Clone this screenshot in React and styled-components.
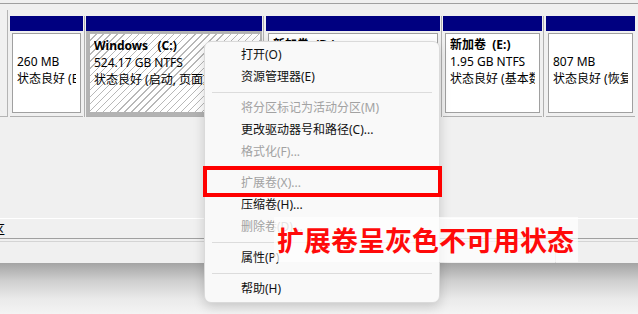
import React from 'react';
import styled, { createGlobalStyle, css } from 'styled-components';

const UI_FONT = `"Noto Sans", "Noto Sans CJK SC", sans-serif`;
const CJK_FONT = `"Noto Sans CJK SC", sans-serif`;

const GlobalStyle = createGlobalStyle`
  html, body { margin: 0; padding: 0; background: #f0f0f0; }
  * { box-sizing: border-box; }
`;

const Root = styled.div`
  position: relative;
  width: 638px;
  height: 314px;
  overflow: hidden;
  display: flex;
  flex-direction: column;
  background: #f0f0f0;
  font-family: ${UI_FONT};
  font-size: 12px;
  color: #000;
`;

const Window = styled.div`
  height: 263px;
  flex-shrink: 0;
  display: flex;
  flex-direction: column;
  background: #f0f0f0;
`;

const TopRule = styled.div`
  height: 4px;
  flex-shrink: 0;
  border-bottom: 1px solid #a0a0a0;
`;

const DiskRow = styled.div`
  display: flex;
  align-items: stretch;
  padding-top: 6px;
  height: 113px;
  flex-shrink: 0;
`;

const DiskStub = styled.div`
  width: 8px;
  margin-right: 2px;
  border-right: 1px solid #b4b4b4;
  border-bottom: 1px solid #b4b4b4;
`;

const Divider = styled.div`
  width: ${p => p.$w}px;
  margin-top: 6px;
  background: linear-gradient(to right, transparent 1px, #b0b0b0 1px, #b0b0b0 2px, transparent 2px);
`;

const Partition = styled.div`
  width: ${p => p.$w}px;
  margin-top: 6px;
  display: flex;
  flex-direction: column;
`;

const PartHeader = styled.div`
  height: 15px;
  background: #000080;
`;

const PartBody = styled.div`
  height: 86px;
  padding: 2px 2px 3px;
  border-bottom: 1px solid #b0b0b0;
  ${p => p.$selected && css`
    padding: 3px 2px 4px 4px;
    background: #b3b3b3;
  `}
`;

const PartBox = styled.div`
  height: 100%;
  border: 1px solid #a0a0a0;
  background: #fff;
  padding: 2px 4px 0;
  ${p => p.$selected && css`
    border: none;
    padding: 3px 4px 0;
    background:
      repeating-linear-gradient(135deg, transparent 0 4px, #b8b8b8 4px 5px),
      #fff;
  `}
`;

const PartText = styled.div`
  overflow: hidden;
  white-space: nowrap;
  line-height: 17px;
  height: 17px;
  font-weight: ${p => (p.$bold ? 700 : 400)};
`;

const Canvas = styled.div`
  flex: 1;
`;

const LegendBar = styled.div`
  height: 20px;
  flex-shrink: 0;
  border-top: 1px solid #ffffff;
  display: flex;
  align-items: center;
  overflow: hidden;
`;

const LegendLabel = styled.span`
  font-family: ${CJK_FONT};
  font-size: 12px;
  margin-left: -7px;
  color: #000;
`;

const StatusBar = styled.div`
  flex-shrink: 0;
  border-top: 1px solid #a0a0a0;
  padding-top: 2px;
`;

const StatusInner = styled.div`
  height: 22px;
  border-top: 1px solid #d4d4d4;
  display: flex;
`;

const StatusPane = styled.div`
  width: ${p => p.$w}px;
  border-right: 1px solid #d8d8d8;
`;

const Shade = styled.div`
  flex: 1;
  background: linear-gradient(#a4a4a4 0%, #cfcfcf 35%, #eaeaea 70%, #f4f4f4 100%);
`;

const Menu = styled.div`
  position: absolute;
  left: 204px;
  top: 41px;
  width: 236px;
  padding: 2px 0 2px;
  background: #f9f9f9;
  border: 1px solid #dadada;
  border-radius: 7px;
  box-shadow: 0 4px 12px rgba(0, 0, 0, 0.16);
  font-family: ${UI_FONT};
`;

const MenuItem = styled.div`
  height: 22px;
  line-height: 22px;
  padding-left: 36px;
  font-size: 12px;
  white-space: nowrap;
  color: ${p => (p.$disabled ? '#a2a2a2' : '#111')};
`;

const MenuSep = styled.div`
  height: 9px;
  padding: 4px 7px 0;
  &::before {
    content: '';
    display: block;
    height: 1px;
    background: #dcdcdc;
  }
`;

const Highlight = styled.div`
  position: absolute;
  left: 203px;
  top: 166px;
  width: 239px;
  height: 31px;
  border: 4px solid #ff0000;
`;

const Callout = styled.div`
  position: absolute;
  left: 274px;
  top: 217px;
  width: 304px;
  height: 45px;
  padding-left: 3px;
  display: flex;
  align-items: center;
  background: rgba(255, 255, 255, 0.7);
`;

const CalloutText = styled.span`
  font-family: ${CJK_FONT};
  font-weight: 700;
  font-size: 27px;
  line-height: 1;
  color: #ff0a0a;
  white-space: nowrap;
`;

const partitions = [
  { w: 73, lines: ['\u00a0', '260 MB', '状态良好 (EFI 系统分区)'] },
  { w: 176, selected: true, lines: ['Windows\u00a0\u00a0\u00a0(C:)', '524.17 GB NTFS', '状态良好 (启动, 页面文件, 故障转储, 基本数据分区)'] },
  { w: 174, lines: ['新加卷\u00a0\u00a0(D:)', '120.00 GB NTFS', '状态良好 (基本数据分区)'] },
  { w: 99, lines: ['新加卷\u00a0\u00a0(E:)', '1.95 GB NTFS', '状态良好 (基本数据分区)'] },
  { w: 89, lines: ['\u00a0', '807 MB', '状态良好 (恢复分区)'] },
];
const dividers = [3, 4, 3, 4];

const menu = [
  { t: '打开(O)' },
  { t: '资源管理器(E)' },
  { sep: true },
  { t: '将分区标记为活动分区(M)', d: true },
  { t: '更改驱动器号和路径(C)...' },
  { t: '格式化(F)...', d: true },
  { sep: true },
  { t: '扩展卷(X)...', d: true },
  { t: '压缩卷(H)...' },
  { t: '删除卷(D)...', d: true },
  { sep: true },
  { t: '属性(P)' },
  { sep: true },
  { t: '帮助(H)' },
];

export default function App() {
  return (
    <>
      <GlobalStyle />
      <Root>
        <Window>
          <TopRule />
          <DiskRow>
            <DiskStub />
            {partitions.map((p, i) => (
              <React.Fragment key={i}>
                <Partition $w={p.w}>
                  <PartHeader />
                  <PartBody $selected={p.selected}>
                    <PartBox $selected={p.selected}>
                      {p.lines.map((l, j) => (
                        <PartText key={j} $bold={j === 0}>{l}</PartText>
                      ))}
                    </PartBox>
                  </PartBody>
                </Partition>
                {i < dividers.length && <Divider $w={dividers[i]} />}
              </React.Fragment>
            ))}
          </DiskRow>
          <Canvas />
          <LegendBar>
            <LegendLabel>区</LegendLabel>
          </LegendBar>
          <StatusBar>
            <StatusInner>
              <StatusPane $w={556} />
            </StatusInner>
          </StatusBar>
        </Window>
        <Shade />

        <Menu>
          {menu.map((m, i) =>
            m.sep ? <MenuSep key={i} /> : <MenuItem key={i} $disabled={m.d}>{m.t}</MenuItem>
          )}
        </Menu>
        <Highlight />
        <Callout>
          <CalloutText>扩展卷呈灰色不可用状态</CalloutText>
        </Callout>
      </Root>
    </>
  );
}
